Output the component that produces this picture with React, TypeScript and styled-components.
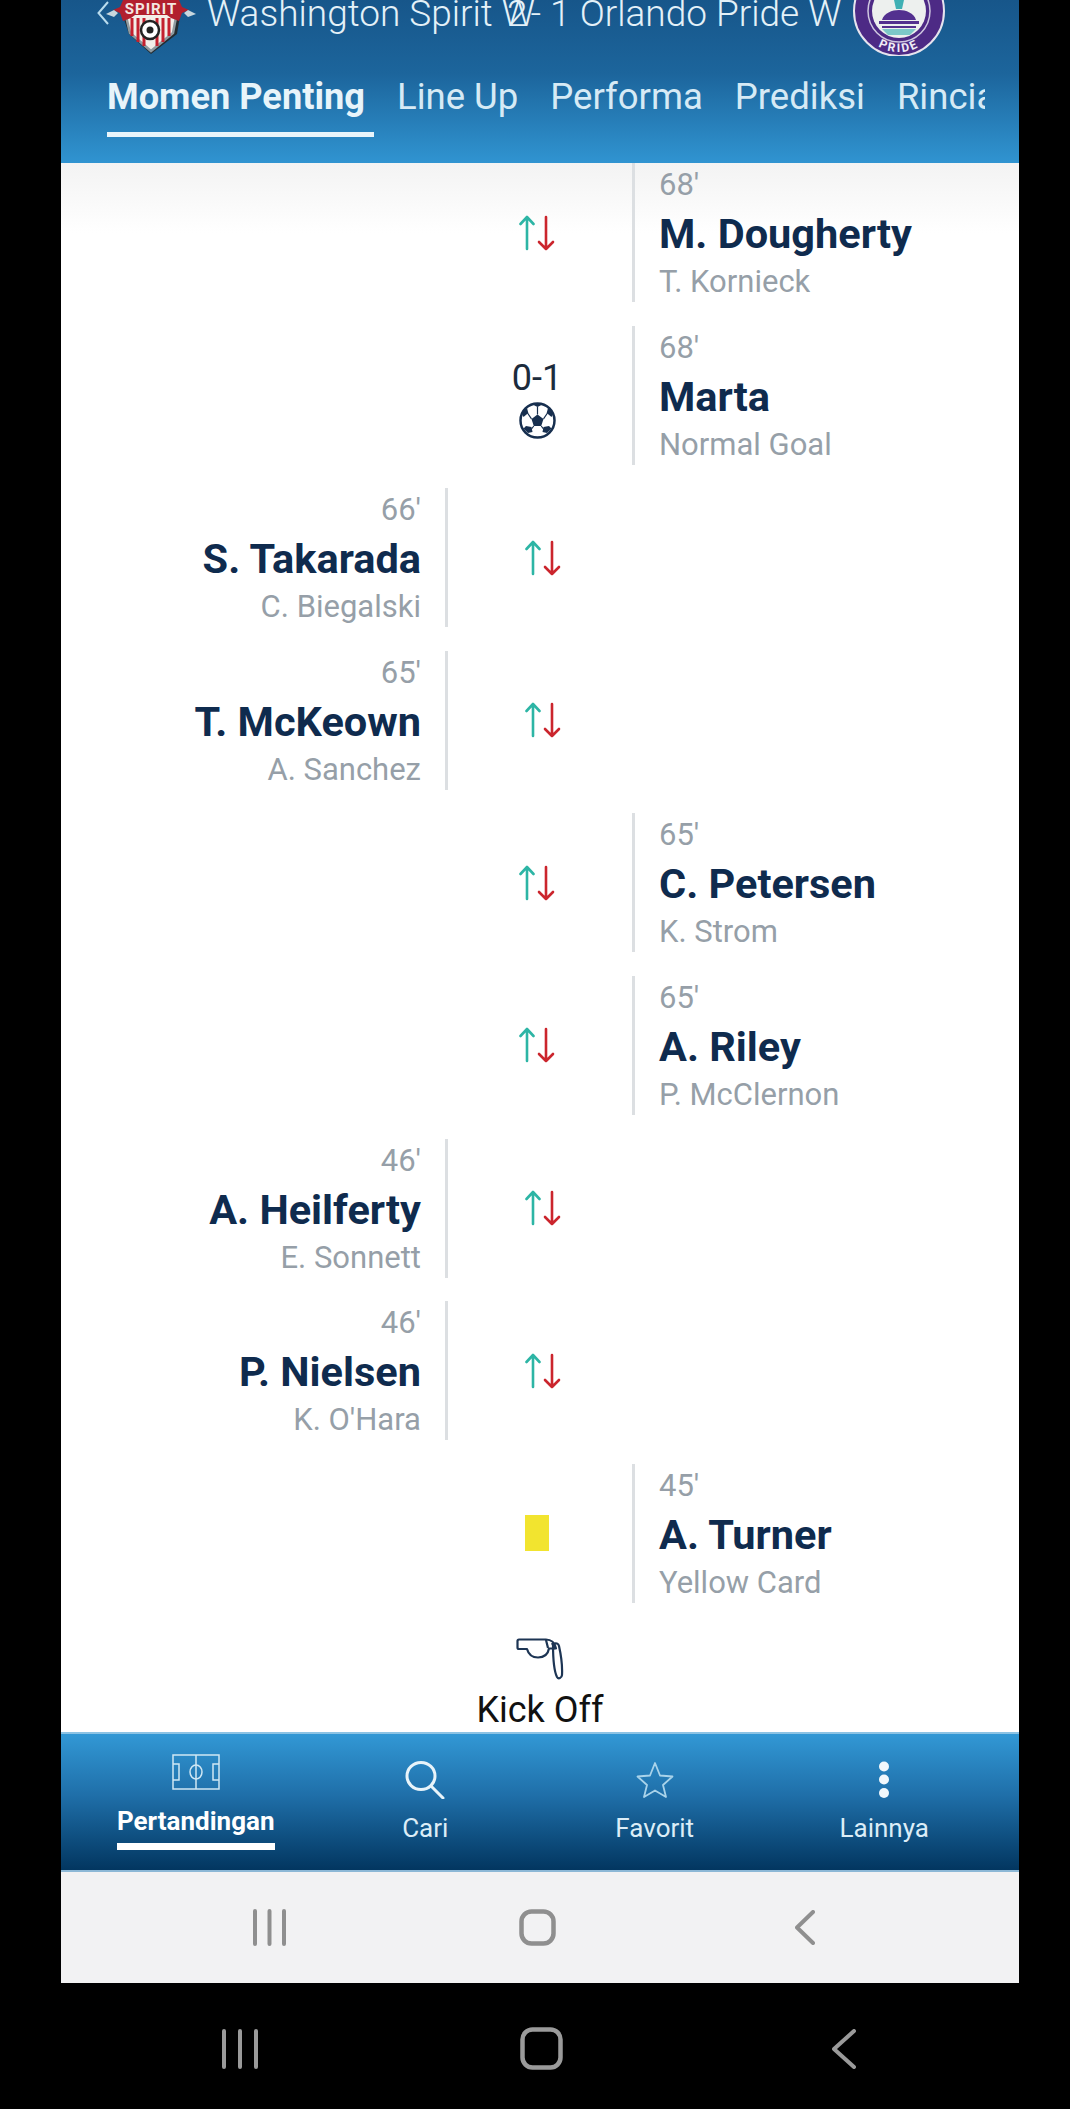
import styled, { createGlobalStyle } from "styled-components";

type Moment = {
  side: "left" | "right";
  minute: string;
  name: string;
  detail: string;
  kind: "sub" | "goal" | "yellow";
  score?: string;
};

const moments: Moment[] = [
  { side: "right", minute: "68'", name: "M. Dougherty", detail: "T. Kornieck", kind: "sub" },
  { side: "right", minute: "68'", name: "Marta", detail: "Normal Goal", kind: "goal", score: "0-1" },
  { side: "left", minute: "66'", name: "S. Takarada", detail: "C. Biegalski", kind: "sub" },
  { side: "left", minute: "65'", name: "T. McKeown", detail: "A. Sanchez", kind: "sub" },
  { side: "right", minute: "65'", name: "C. Petersen", detail: "K. Strom", kind: "sub" },
  { side: "right", minute: "65'", name: "A. Riley", detail: "P. McClernon", kind: "sub" },
  { side: "left", minute: "46'", name: "A. Heilferty", detail: "E. Sonnett", kind: "sub" },
  { side: "left", minute: "46'", name: "P. Nielsen", detail: "K. O'Hara", kind: "sub" },
  { side: "right", minute: "45'", name: "A. Turner", detail: "Yellow Card", kind: "yellow" },
];

const GlobalStyle = createGlobalStyle`
  html, body {
    margin: 0;
    padding: 0;
    background: #000;
    font-family: Roboto, "Liberation Sans", sans-serif;
  }
`;

const Phone = styled.div`
  width: 1070px;
  height: 2109px;
  overflow: hidden;
  background: #000;
  display: flex;
  flex-direction: column;
`;

const Screen = styled.div`
  width: 958px;
  margin-left: 61px;
  height: 1983px;
  display: flex;
  flex-direction: column;
`;

const Header = styled.header`
  height: 163px;
  flex: none;
  background: linear-gradient(180deg, #17568a 0%, #1c659c 45%, #3094d1 100%);
  color: #e4f1f8;
`;

const MatchRow = styled.div`
  height: 56px;
  display: flex;
  align-items: flex-start;
  padding-left: 36px;
  overflow: hidden;
`;

const BackChevron = styled.svg`
  flex: none;
  margin-top: 1px;
`;

const SpiritBadge = styled.div`
  flex: none;
  margin-left: -4px;
`;

const MatchTitle = styled.div`
  margin: -8px 0 0 4px;
  font-size: 37px;
  font-weight: 300;
  line-height: 44px;
  white-space: nowrap;
  width: 646px;
`;

const ScoreDigit = styled.span`
  margin-left: -28px;
  margin-right: 3px;
`;

const TabStrip = styled.nav`
  margin: 0 34px 0 46px;
  height: 81px;
  padding-top: 19px;
  box-sizing: border-box;
  display: flex;
  gap: 32px;
  overflow: hidden;
`;

const TopTab = styled.div<{ $active?: boolean }>`
  position: relative;
  flex: none;
  height: 62px;
  font-size: ${(p) => (p.$active ? 36.2 : 36.5)}px;
  line-height: 44px;
  font-weight: ${(p) => (p.$active ? 700 : 400)};
  color: ${(p) => (p.$active ? "#e8f4fa" : "#d6eaf5")};

  ${(p) =>
    p.$active &&
    `&::after {
      content: "";
      position: absolute;
      left: 0;
      right: -9px;
      bottom: 0;
      height: 5px;
      background: #e9f5fb;
    }`}
`;

const Feed = styled.main`
  position: relative;
  height: 1569px;
  flex: none;
  overflow: hidden;
  background: #fff;

  &::before {
    content: "";
    position: absolute;
    left: 0;
    right: 0;
    top: 0;
    height: 70px;
    background: linear-gradient(180deg, #f3f3f3, #fff);
  }
`;

const MomentList = styled.div`
  position: relative;
  display: flex;
  flex-direction: column;
  gap: 23.6px;
`;

const Row = styled.div<{ $side: "left" | "right" }>`
  display: grid;
  grid-template-columns: ${(p) => (p.$side === "left" ? "387px 189px 1fr" : "381px 190px 1fr")};
  height: 139px;
`;

const Info = styled.div<{ $side: "left" | "right" }>`
  box-sizing: border-box;
  display: flex;
  flex-direction: column;
  white-space: nowrap;
  ${(p) =>
    p.$side === "left"
      ? "border-right: 3px solid #dcdfe2; padding-right: 24px; align-items: flex-end;"
      : "border-left: 3px solid #dcdfe2; padding-left: 24px; align-items: flex-start;"}
`;

const Minute = styled.div`
  font-size: 31px;
  line-height: 44px;
  color: #969fa8;
`;

const PlayerName = styled.div`
  font-size: 41.5px;
  font-weight: 700;
  line-height: 54px;
  color: #0f2b4e;
`;

const Detail = styled.div`
  font-size: 31px;
  line-height: 41px;
  color: #969fa8;
`;

const IconCell = styled.div`
  display: flex;
  flex-direction: column;
  align-items: center;
  justify-content: center;
`;

const Score = styled.div`
  margin: 4px 0 2px;
  font-size: 36px;
  line-height: 44px;
  color: #1c2b3c;
`;

const YellowCard = styled.div`
  width: 24px;
  height: 36px;
  background: #f2e42f;
`;

const KickOff = styled.div`
  position: relative;
  margin-top: 32px;
  display: flex;
  flex-direction: column;
  align-items: center;
  color: #111;
  font-size: 36px;
  line-height: 44px;
`;

const KickOffLabel = styled.div`
  margin-top: 8px;
`;

const BottomNav = styled.nav`
  height: 140px;
  flex: none;
  box-sizing: border-box;
  border-top: 2px solid #8cc3e4;
  border-bottom: 2px solid #8db8d6;
  padding-left: 20px;
  background: linear-gradient(180deg, #3298d5 0%, #1f6fa9 45%, #023660 100%);
  display: grid;
  grid-template-columns: repeat(4, 229.5px);
`;

const NavItem = styled.div<{ $active?: boolean }>`
  display: flex;
  flex-direction: column;
  align-items: center;
  padding-top: ${(p) => (p.$active ? 20 : 27)}px;
  color: ${(p) => (p.$active ? "#fff" : "#dcedf7")};
`;

const NavIcon = styled.div<{ $h: number }>`
  height: ${(p) => p.$h}px;
  display: flex;
  align-items: center;
`;

const NavLabel = styled.div<{ $active?: boolean }>`
  position: relative;
  margin-top: ${(p) => (p.$active ? 16 : 14)}px;
  font-size: 26px;
  line-height: 30px;
  font-weight: ${(p) => (p.$active ? 700 : 400)};
  white-space: nowrap;

  ${(p) =>
    p.$active &&
    `&::after {
      content: "";
      position: absolute;
      left: 0;
      right: 0;
      bottom: -14px;
      height: 7px;
      background: #fff;
    }`}
`;

const SystemBar = styled.div<{ $dark?: boolean }>`
  display: grid;
  align-items: center;
  height: ${(p) => (p.$dark ? 126 : 112)}px;
  padding-top: ${(p) => (p.$dark ? 5 : 0)}px;
  padding-bottom: ${(p) => (p.$dark ? 0 : 2)}px;
  box-sizing: border-box;
  flex: none;
  background: ${(p) => (p.$dark ? "#000" : "#f2f2f3")};
`;

const SystemIcons = styled.div<{ $dark?: boolean }>`
  display: grid;
  align-items: center;
  justify-items: center;
  grid-template-columns: ${(p) => (p.$dark ? "38px 261px 43px 269px 24px" : "35px 232px 37px 239px 20px")};
  margin-left: ${(p) => (p.$dark ? "221px" : "191px")};
  color: ${(p) => (p.$dark ? "#9a9a9a" : "#8f8f8f")};

  & > svg {
    display: block;
  }
`;

const SwapIcon = () => (
  <svg width="36" height="36" viewBox="0 0 36 36" fill="none" strokeWidth="2.6" strokeLinecap="round" strokeLinejoin="round">
    <path d="M8 34V2M1.500 9L8 2l6.500 7" stroke="#2db5a5" />
    <path d="M27 2v32M20 27l7 7 7-7" stroke="#cb252d" />
  </svg>
);

const BallIcon = () => (
  <svg width="37" height="37" viewBox="0 0 37 37">
    <circle cx="18.5" cy="18.5" r="17" fill="#fff" stroke="#172f4f" strokeWidth="2.5" />
    <path d="M18.5 12.500l6 4.400-2.300 7h-7.400l-2.300-7z" fill="#172f4f" />
    <path d="M13.500 2.500l5 2.500 5-2.500-1-1.500h-8zM3.500 13l.8-5 3.700-2 1.300 5-4.800 4zM33.500 13l-.8-5-3.700-2-1.300 5 4.800 4zM9 31l4.500-1-1-5-5.500-1-2.500 2.500zM28 31l-4.500-1 1-5 5.500-1 2.500 2.500z" fill="#172f4f" />
    <path d="M18.500 5v7.500M12.500 16.900L8.500 11M24.500 16.900l4-5.900M14.800 24L12.500 27M22.200 24l2.300 3" stroke="#172f4f" strokeWidth="1.200" />
  </svg>
);

const WhistleIcon = () => (
  <svg width="48" height="45" viewBox="0 0 48 45" fill="none" stroke="#1d3554" strokeWidth="2.200" strokeLinejoin="round">
    <path d="M3 4.500h27c5 0 9 3.500 10 9l-7 0c-1 5.500-5 9-11 9-5.500 0-9.500-3-11-8.500H3c-1 0-1.500-.5-1.500-1.500V6c0-1 .5-1.500 1.500-1.500z" />
    <path d="M37 9c3-1.500 5.500-.5 6 2 2 9 3.500 20 3 29-.2 3-3.500 4.500-5 2-2.500-5-4-18-4-33z" />
    <path d="M30 5l2 8M36 8l3 6" />
  </svg>
);

const SpiritLogo = () => (
  <svg width="98" height="56" viewBox="0 0 98 56">
    <path d="M16 10h60l-4 24-26 20-22-20z" fill="#232b30" />
    <path d="M20 12h52l-4 21-22 18-21-18z" fill="#f3eee9" stroke="#8e9aa0" strokeWidth="2.500" />
    <path d="M27 18v18M33 18v24M39 18v28M52 18v28M58 18v24M64 18v18" stroke="#c4202f" strokeWidth="3" />
    <path d="M8 10l7-3 3-7h56l3 7 7 3-7 3-3 8-8-3-4-3H30l-4 3-8 3-3-8z" fill="#b21f2d" />
    <path d="M1 14l8-4 4 3-4 4zM91 14l-8-4-4 3 4 4z" fill="#c8d7de" />
    <circle cx="45" cy="30" r="9" fill="#fff" stroke="#222" strokeWidth="2.500" />
    <circle cx="45" cy="30" r="3.500" fill="#222" />
    <text x="46" y="14" textAnchor="middle" fontFamily="Roboto, sans-serif" fontSize="15" fontWeight="700" letterSpacing="1" fill="#f4e7e1">SPIRIT</text>
  </svg>
);

const PrideLogo = () => (
  <svg width="92" height="58" viewBox="0 0 92 58">
    <defs>
      <path id="prideArc" d="M5 11a41 41 0 0 0 82 0" />
    </defs>
    <circle cx="46" cy="11" r="45" fill="#4d2a85" stroke="#e6e4ee" strokeWidth="2" />
    <circle cx="46" cy="11" r="31" fill="#4d2a85" stroke="#cfc7e0" strokeWidth="1.500" />
    <circle cx="46" cy="11" r="27" fill="#edf0ee" />
    <path d="M29 20c2-7 10-10 17-10s15 3 17 10z" fill="#53308f" />
    <path d="M26 21h40v3H26zM29 26h34v2H29z" fill="#53308f" />
    <path d="M29 29h34l-6 6H35z" fill="#7cc8c8" />
    <path d="M41 0h10l-2 9h-6z" fill="#3fb0b4" />
    <text fontFamily="Roboto, sans-serif" fontSize="12" fontWeight="700" letterSpacing="2" fill="#f0ecf6">
      <textPath href="#prideArc" startOffset="50%" textAnchor="middle">PRIDE</textPath>
    </text>
  </svg>
);

const PitchIcon = () => (
  <svg width="48" height="36" viewBox="0 0 48 36" fill="none" stroke="#cfe7f4" strokeWidth="1.500">
    <rect x="1" y="1" width="46" height="34" />
    <path d="M24 1v34M1 10h6v16H1M47 10h-6v16h6" />
    <ellipse cx="24" cy="18" rx="6" ry="7" />
  </svg>
);

const SearchIcon = () => (
  <svg width="40" height="38" viewBox="0 0 40 38" fill="none" stroke="#e8f4fa" strokeWidth="3" strokeLinecap="round">
    <ellipse cx="16" cy="15" rx="14" ry="13.500" />
    <path d="M26 25l12 12" />
  </svg>
);

const StarIcon = () => (
  <svg width="38" height="38" viewBox="0 0 38 38" fill="none" stroke="#a9d3ea" strokeWidth="1.800" strokeLinejoin="round">
    <path d="M19 2l5 12.500 12.500 1-9.500 8.500 3 12-11-6.500L8 36l3-12-9.500-8.500 12.500-1z" />
  </svg>
);

const DotsIcon = () => (
  <svg width="12" height="38" viewBox="0 0 12 38" fill="#f1f8fc">
    <circle cx="6" cy="5.500" r="5" />
    <circle cx="6" cy="18.500" r="5" />
    <circle cx="6" cy="32" r="5" />
  </svg>
);

const RecentsIcon = ({ w, h }: { w: number; h: number }) => (
  <svg width={w} height={h} viewBox={`0 0 ${w} ${h}`} stroke="currentColor" strokeWidth="4" strokeLinecap="round">
    <path d={`M3 2v${h - 4}M${w / 2} 2v${h - 4}M${w - 3} 2v${h - 4}`} />
  </svg>
);

const HomeIcon = ({ w, h }: { w: number; h: number }) => (
  <svg width={w} height={h} viewBox={`0 0 ${w} ${h}`} fill="none" stroke="currentColor" strokeWidth="4.500">
    <rect x="2.500" y="2.500" width={w - 5} height={h - 5} rx="10" />
  </svg>
);

const BackIcon = ({ w, h }: { w: number; h: number }) => (
  <svg width={w} height={h} viewBox={`0 0 ${w} ${h}`} fill="none" stroke="currentColor" strokeWidth="4" strokeLinecap="round" strokeLinejoin="round">
    <path d={`M${w - 2} 2L2 ${h / 2}l${w - 4} ${h / 2 - 2}`} />
  </svg>
);

function EventIcon({ moment }: { moment: Moment }) {
  if (moment.kind === "goal") {
    return (
      <IconCell>
        <Score>{moment.score}</Score>
        <BallIcon />
      </IconCell>
    );
  }
  if (moment.kind === "yellow") {
    return (
      <IconCell>
        <YellowCard />
      </IconCell>
    );
  }
  return (
    <IconCell>
      <SwapIcon />
    </IconCell>
  );
}

function MomentRow({ moment }: { moment: Moment }) {
  const info = (
    <Info $side={moment.side}>
      <Minute>{moment.minute}</Minute>
      <PlayerName>{moment.name}</PlayerName>
      <Detail>{moment.detail}</Detail>
    </Info>
  );

  return (
    <Row $side={moment.side}>
      {moment.side === "left" ? info : <div />}
      <EventIcon moment={moment} />
      {moment.side === "right" ? info : <div />}
    </Row>
  );
}

export default function App() {
  return (
    <Phone>
      <GlobalStyle />
      <Screen>
        <Header>
          <MatchRow>
            <BackChevron width="12" height="24" viewBox="0 0 12 24" fill="none" stroke="#b9dcee" strokeWidth="2">
              <path d="M11 1L1.500 12 11 23" />
            </BackChevron>
            <SpiritBadge>
              <SpiritLogo />
            </SpiritBadge>
            <MatchTitle>
              Washington Spirit W<ScoreDigit>2</ScoreDigit>- 1 Orlando Pride W
            </MatchTitle>
            <PrideLogo />
          </MatchRow>
          <TabStrip>
            <TopTab $active>Momen Penting</TopTab>
            <TopTab>Line Up</TopTab>
            <TopTab>Performa</TopTab>
            <TopTab>Prediksi</TopTab>
            <TopTab>Rincian</TopTab>
          </TabStrip>
        </Header>

        <Feed>
          <MomentList>
            {moments.map((moment) => (
              <MomentRow key={moment.name} moment={moment} />
            ))}
          </MomentList>
          <KickOff>
            <WhistleIcon />
            <KickOffLabel>Kick Off</KickOffLabel>
          </KickOff>
        </Feed>

        <BottomNav>
          <NavItem $active>
            <NavIcon $h={36}>
              <PitchIcon />
            </NavIcon>
            <NavLabel $active>Pertandingan</NavLabel>
          </NavItem>
          <NavItem>
            <NavIcon $h={38}>
              <SearchIcon />
            </NavIcon>
            <NavLabel>Cari</NavLabel>
          </NavItem>
          <NavItem>
            <NavIcon $h={38}>
              <StarIcon />
            </NavIcon>
            <NavLabel>Favorit</NavLabel>
          </NavItem>
          <NavItem>
            <NavIcon $h={38}>
              <DotsIcon />
            </NavIcon>
            <NavLabel>Lainnya</NavLabel>
          </NavItem>
        </BottomNav>

        <SystemBar>
          <SystemIcons>
            <RecentsIcon w={35} h={37} />
            <span />
            <HomeIcon w={37} h={37} />
            <span />
            <BackIcon w={20} h={35} />
          </SystemIcons>
        </SystemBar>
      </Screen>

      <SystemBar $dark>
        <SystemIcons $dark>
          <RecentsIcon w={38} h={40} />
          <span />
          <HomeIcon w={43} h={43} />
          <span />
          <BackIcon w={24} h={40} />
        </SystemIcons>
      </SystemBar>
    </Phone>
  );
}
